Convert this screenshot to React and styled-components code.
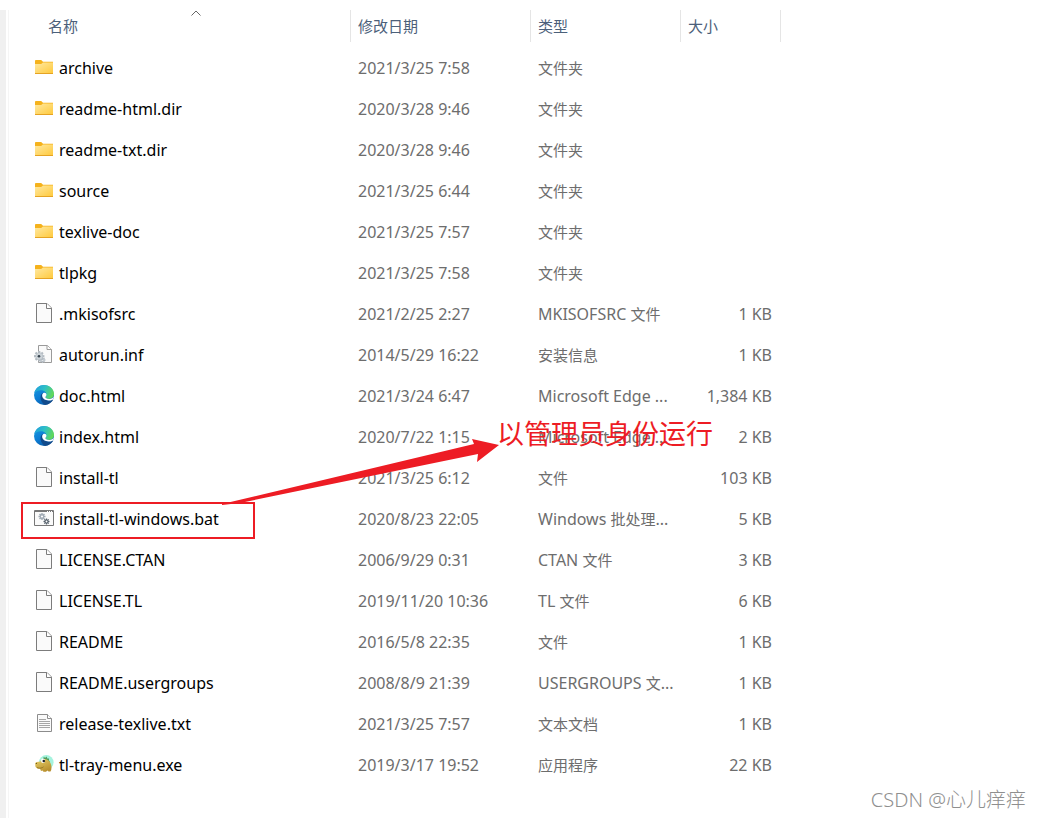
import React from "react";
import styled, { createGlobalStyle } from "styled-components";

const GlobalStyle = createGlobalStyle`
  * {
    box-sizing: border-box;
  }

  body {
    margin: 0;
    background: #fff;
    font-family: "Noto Sans", "Noto Sans CJK SC", sans-serif;
    font-size: 15px;
    line-height: 20px;
  }
`;

const files = [
  { name: "archive", date: "2021/3/25 7:58", type: "文件夹", size: "", icon: "folder" },
  { name: "readme-html.dir", date: "2020/3/28 9:46", type: "文件夹", size: "", icon: "folder" },
  { name: "readme-txt.dir", date: "2020/3/28 9:46", type: "文件夹", size: "", icon: "folder" },
  { name: "source", date: "2021/3/25 6:44", type: "文件夹", size: "", icon: "folder" },
  { name: "texlive-doc", date: "2021/3/25 7:57", type: "文件夹", size: "", icon: "folder" },
  { name: "tlpkg", date: "2021/3/25 7:58", type: "文件夹", size: "", icon: "folder" },
  { name: ".mkisofsrc", date: "2021/2/25 2:27", type: "MKISOFSRC 文件", size: "1 KB", icon: "file" },
  { name: "autorun.inf", date: "2014/5/29 16:22", type: "安装信息", size: "1 KB", icon: "setup" },
  { name: "doc.html", date: "2021/3/24 6:47", type: "Microsoft Edge ...", size: "1,384 KB", icon: "edge" },
  { name: "index.html", date: "2020/7/22 1:15", type: "Microsoft Edge ...", size: "2 KB", icon: "edge" },
  { name: "install-tl", date: "2021/3/25 6:12", type: "文件", size: "103 KB", icon: "file" },
  { name: "install-tl-windows.bat", date: "2020/8/23 22:05", type: "Windows 批处理...", size: "5 KB", icon: "batch", marked: true },
  { name: "LICENSE.CTAN", date: "2006/9/29 0:31", type: "CTAN 文件", size: "3 KB", icon: "file" },
  { name: "LICENSE.TL", date: "2019/11/20 10:36", type: "TL 文件", size: "6 KB", icon: "file" },
  { name: "README", date: "2016/5/8 22:35", type: "文件", size: "1 KB", icon: "file" },
  { name: "README.usergroups", date: "2008/8/9 21:39", type: "USERGROUPS 文...", size: "1 KB", icon: "file" },
  { name: "release-texlive.txt", date: "2021/3/25 7:57", type: "文本文档", size: "1 KB", icon: "text" },
  { name: "tl-tray-menu.exe", date: "2019/3/17 19:52", type: "应用程序", size: "22 KB", icon: "dino" },
];

const gearTeeth = [0, 45, 90, 135];

const Gear = ({ x, y, r, color }) => (
  <g transform={`translate(${x} ${y})`}>
    {gearTeeth.map((deg) => (
      <path
        key={deg}
        d={`M0 ${-r}V${r}`}
        stroke={color}
        strokeWidth={r * 0.42}
        transform={`rotate(${deg})`}
      />
    ))}
    <circle r={r * 0.7} fill={color} />
    <circle r={r * 0.32} fill="#fff" />
  </g>
);

const icons = {
  folder: (
    <>
      <path d="M1 4.2C1 3.5 1.4 3 2 3H7.2L9 4.8H19V16H1Z" fill="#f5b21c" />
      <path d="M1 7H7.2L9 5.6H19V16H1Z" fill="url(#folderFill)" />
      <path d="M1 16.5H19" stroke="#e5a323" />
    </>
  ),
  file: (
    <>
      <path d="M2.5 .5H13L17.5 5V19.5H2.5Z" fill="#fafafa" stroke="#7c7c7c" />
      <path d="M12.5 .5V5.5H17.5" fill="#fff" stroke="#7c7c7c" />
    </>
  ),
  setup: (
    <>
      <path d="M4.5 1.5H13.5L17.5 5.5V18.5H4.5Z" fill="#fafafa" stroke="#9a9a9a" />
      <path d="M13 1.5V5.5H17.5" fill="#fff" stroke="#9a9a9a" />
      <Gear x={8.5} y={16} r={3} color="#b5bdc4" />
      <Gear x={5.2} y={12.2} r={5.2} color="#b3bbc2" />
      <circle cx="5.2" cy="12.2" r="3.2" fill="#ccd3d8" />
      <circle cx="5" cy="12.2" r="1.3" fill="#35424c" />
    </>
  ),
  edge: (
    <>
      <circle cx="10" cy="10" r="10" fill="url(#edgeBase)" />
      <path
        d="M.2 8.6C1.2 3 5.5 0 10 0C15.8 0 20 4.3 20 8.8C20 12 17.6 13.9 15 13.9C12.7 13.9 11.4 13.1 11.4 12.3C11.4 11.5 12.5 11.3 12.5 9.6C12.5 7.3 10 5.3 6.8 5.3C4 5.3 1.4 6.5 .2 8.6Z"
        fill="url(#edgeTop)"
      />
      <path
        d="M7.4 9.3C5.7 12 6.5 17 11 19.9C15 19.6 17.5 17.5 19.1 14.9C19.2 14.6 18.9 14.5 18.6 14.7C13.8 17 8.4 14.2 8.4 10.5C8.4 9.2 9 8.3 9.7 7.8C8.7 7.9 7.9 8.5 7.4 9.3Z"
        fill="#114a8b"
      />
      <path
        d="M9.8 7.8C8.7 8.4 8 9.6 8.2 11.1C8.6 14.5 13.2 16.9 18.7 14.7L20 11.5C19 13.2 17 14 15 13.9C12.7 13.9 11.4 13.1 11.4 12.3C11.4 11.5 12.5 11.3 12.5 9.6C12.4 8.3 11.2 7.4 9.8 7.8Z"
        fill="#fff"
      />
    </>
  ),
  batch: (
    <>
      <path d="M.5 2.5H19.5V17.5H.5Z" fill="#fafafa" stroke="#777" />
      <path d="M1 3.5H19" stroke="#777" />
      <path d="M13 3.5H18" stroke="#fff" strokeDasharray="1 1" />
      <Gear x={8} y={8.5} r={3.5} color="#a1abb5" />
      <Gear x={12.5} y={13.5} r={3} color="#56616c" />
    </>
  ),
  text: (
    <>
      <path d="M3.5 1.5H13.5L17.5 5.5V18.5H3.5Z" fill="#fafafa" stroke="#8c8c8c" />
      <path d="M13.5 1.5V5.5H17.5" fill="#fff" stroke="#8c8c8c" />
      <path d="M5 6.5H12M5 8.5H16M5 10.5H16M5 12.5H16M5 14.5H16" stroke="#a5a5a5" />
    </>
  ),
  dino: (
    <>
      <circle cx="12.3" cy="8.3" r="7.3" fill="#a5f3de" />
      <path d="M9 4.5L10 2.8L11 4L12.5 2.6L13.3 4.5L15 4.6L15 6.5L16 8L14 9Z" fill="#4f9a5c" />
      <path
        d="M1.2 9.5C1.5 7.6 4 7.6 6.3 7.4C7 5.4 9.5 4.6 12 5.3C15 6.2 16.6 8.5 17.2 11C17.8 14 17.4 16 16.5 17.5H14.5L13.5 16.5L12 17.8H9.5L8.5 16.5L7 17L6 14.8C4.5 15 2 14.3 1.4 12.5Z"
        fill="url(#dinoSkin)"
      />
      <path d="M3 13.6C6 14.6 8 14.2 9.5 12.8" fill="none" stroke="#8a6c1c" strokeWidth=".8" />
      <ellipse cx="9" cy="6.8" rx="2" ry="2.2" fill="#fff" />
      <circle cx="9.8" cy="7" r="1.3" fill="#20242a" />
      <circle cx="2.4" cy="9.4" r=".6" fill="#6d5514" />
    </>
  ),
};

const columns = [
  { label: "修改日期", width: 180 },
  { label: "类型", width: 150 },
  { label: "大小", width: 100 },
];

// 汉字比西文小一号
const MixedText = ({ children }) =>
  children
    .split(/([\u4e00-\u9fff]+)/)
    .map((part, i) => (i % 2 ? <Hanzi key={i}>{part}</Hanzi> : part));

const App = () => {
  return (
    <>
      <GlobalStyle />
      <Gradients />
      <Page>
        <Rail />
        <FileTable>
          <thead>
            <tr>
              <HeadCell $width={342}>
                <NameHead>
                  <SortButton type="button">名称</SortButton>
                  <SortCaret viewBox="0 0 10 6" aria-hidden="true">
                    <path d="M.5 5.5L5 1L9.5 5.5" fill="none" stroke="#666" />
                  </SortCaret>
                </NameHead>
              </HeadCell>
              {columns.map((column) => (
                <HeadCell key={column.label} $width={column.width}>
                  <SortButton type="button">{column.label}</SortButton>
                </HeadCell>
              ))}
            </tr>
          </thead>
          <tbody>
            {files.map((file) => (
              <tr key={file.name}>
                <NameCell>
                  <FileName>
                    <FileIcon viewBox="0 0 20 20" aria-hidden="true">
                      {icons[file.icon]}
                    </FileIcon>
                    {file.name}
                  </FileName>
                  {file.marked && <Callout />}
                </NameCell>
                <Cell>{file.date}</Cell>
                <Cell>
                  <MixedText>{file.type}</MixedText>
                </Cell>
                <SizeCell>{file.size}</SizeCell>
              </tr>
            ))}
          </tbody>
        </FileTable>
        <Watermark>CSDN @心儿痒痒</Watermark>
      </Page>
    </>
  );
};

// 红框 + 箭头 + 说明文字
const Callout = () => (
  <>
    <MarkBox />
    <Arrow viewBox="0 0 278 70" aria-hidden="true">
      <path d="M0 69L252 9L250 4L277 10L255 27L256 19L18 68L0 70Z" fill="#ed1c24" />
    </Arrow>
    <Note>以管理员身份运行</Note>
  </>
);

const Gradients = () => (
  <GradientDefs aria-hidden="true">
    <defs>
      <linearGradient id="folderFill" x1="0" y1="0" x2="1" y2="1">
        <stop offset="0" stopColor="#ffe9a2" />
        <stop offset="1" stopColor="#ffca3e" />
      </linearGradient>
      <linearGradient id="edgeBase" x1="0" y1="0" x2="0.6" y2="1">
        <stop offset="0" stopColor="#1b9de2" />
        <stop offset="0.6" stopColor="#0b7bd3" />
        <stop offset="1" stopColor="#0c59a4" />
      </linearGradient>
      <linearGradient id="edgeTop" x1="0" y1="0.2" x2="1" y2="0.5">
        <stop offset="0" stopColor="#1f9fdc" />
        <stop offset="0.5" stopColor="#2fc0c6" />
        <stop offset="1" stopColor="#62d957" />
      </linearGradient>
      <linearGradient id="dinoSkin" x1="0" y1="0" x2="0.6" y2="1">
        <stop offset="0" stopColor="#e8d168" />
        <stop offset="1" stopColor="#b8902f" />
      </linearGradient>
    </defs>
  </GradientDefs>
);

export default App;

// 스타일 컴포넌트
const Page = styled.main`
  position: relative;
  display: flex;
  align-items: stretch;
  min-height: 100vh;
  padding-top: 10px;
  overflow: hidden;
`;

const Rail = styled.div`
  flex: none;
  width: 9px;
  border-left: 6px solid #f0f0f0;
  border-right: 1px solid #f5f5f5;
`;

const FileTable = styled.table`
  flex: none;
  align-self: flex-start;
  border-collapse: separate;
  border-spacing: 0;

  tbody::before {
    content: "";
    display: block;
    height: 5px;
  }
`;

const HeadCell = styled.th`
  width: ${(props) => props.$width}px;
  height: 32px;
  padding: 0 0 0 7px;
  border-right: 1px solid #e5e5e5;
  text-align: left;
  font-weight: 400;
`;

const NameHead = styled.div`
  position: relative;
  margin-left: 24px;
  padding-left: 8px;
`;

const SortButton = styled.button`
  display: block;
  padding: 0;
  border: none;
  background: none;
  color: #4c607a;
  font: inherit;
`;

const SortCaret = styled.svg`
  position: absolute;
  top: -6px;
  left: 50%;
  width: 10px;
  height: 6px;
  margin-left: -4px;
`;

const Cell = styled.td`
  height: 41px;
  padding: 0 0 0 7px;
  color: #6d6d6d;
  font-size: 16px;
  white-space: nowrap;
`;

const SizeCell = styled(Cell)`
  padding-right: 9px;
  text-align: right;
`;

const Hanzi = styled.span`
  font-size: 15px;
`;

const NameCell = styled(Cell)`
  position: relative;
  padding-left: 25px;
  color: #000;
`;

const FileName = styled.span`
  display: flex;
  align-items: center;
  gap: 5px;
`;

const FileIcon = styled.svg`
  flex: none;
  width: 20px;
  height: 20px;
  margin-bottom: 2px;
`;

const MarkBox = styled.span`
  position: absolute;
  top: 4px;
  left: 12px;
  width: 234px;
  height: 37px;
  border: 2px solid #ed1c24;
`;

const Arrow = styled.svg`
  position: absolute;
  z-index: 1;
  top: -63px;
  left: 213px;
  width: 278px;
  height: 70px;
`;

const Note = styled.span`
  position: absolute;
  z-index: 1;
  top: -84px;
  left: 488px;
  color: #ed1c24;
  font-size: 27px;
  line-height: 40px;
`;

const Watermark = styled.div`
  position: absolute;
  right: 14px;
  bottom: 4px;
  color: #8f8f8f;
  font-size: 20px;
  line-height: 28px;
  font-weight: 300;
`;

const GradientDefs = styled.svg`
  position: absolute;
  width: 0;
  height: 0;
`;
